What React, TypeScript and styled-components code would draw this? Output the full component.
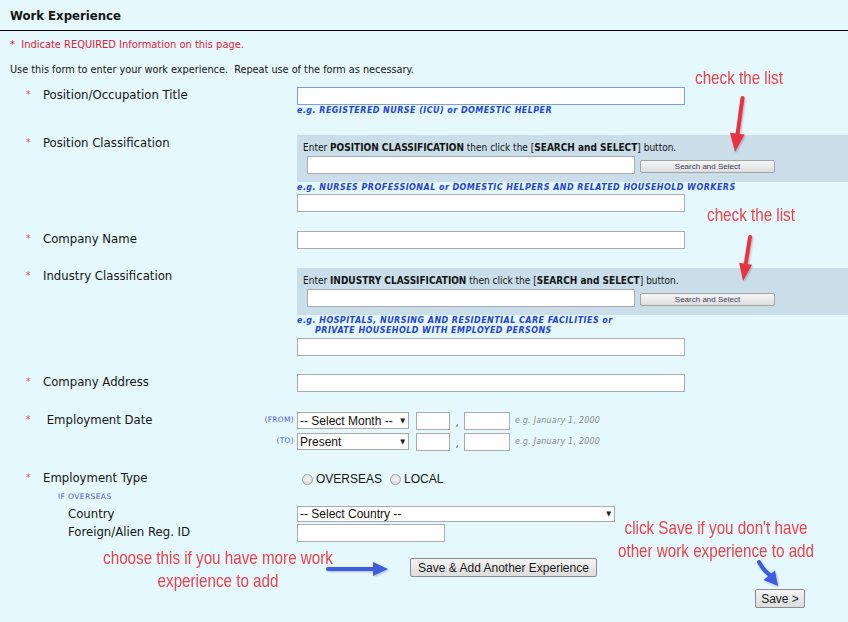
import React from 'react';
import styled, { createGlobalStyle } from 'styled-components';

const GlobalStyle = createGlobalStyle`
  html, body {
    margin: 0;
    padding: 0;
    background: #e4f8fd;
  }
  * { box-sizing: border-box; }
`;

const Page = styled.div`
  position: relative;
  width: 848px;
  height: 622px;
  overflow: hidden;
  background: #e4f8fd;
  font-family: "DejaVu Sans Condensed", "Liberation Sans", sans-serif;
  color: #151515;
`;

const Header = styled.h1`
  margin: 0;
  height: 31px;
  padding: 8px 10px 0;
  border-bottom: 1px solid #000;
  font-size: 13px;
  line-height: 16px;
  font-weight: bold;
`;

const RequiredNote = styled.div`
  margin: 7px 0 0 10px;
  font-size: 11px;
  line-height: 14px;
  color: #d9213b;
`;

const Intro = styled.div`
  margin: 11px 0 0 10px;
  font-size: 10.8px;
  line-height: 14px;
`;

const Form = styled.form`
  margin: 10px 0 0;
`;

const Row = styled.div<{ $mt: number }>`
  display: grid;
  grid-template-columns: 297px 551px;
  margin-top: ${p => p.$mt}px;
`;

const Label = styled.div<{ $indent?: number }>`
  display: flex;
  padding-left: ${p => p.$indent ?? 26}px;
  font-size: 13px;
  line-height: 16px;
`;

const Star = styled.span`
  width: 17px;
  color: #e0506a;
  font-size: 10px;
`;

const Field = styled.div`
  display: flex;
  flex-direction: column;
  align-items: flex-start;
`;

const TextInput = styled.input<{ $w: number; $focus?: boolean }>`
  width: ${p => p.$w}px;
  height: 18px;
  padding: 0 3px;
  border: 1px solid ${p => (p.$focus ? '#7b9fd6' : '#a7acb0')};
  background: #fff;
  font: 12px "Liberation Sans", Arial, sans-serif;
  outline: none;
`;

const Hint = styled.div`
  margin-top: 1px;
  font-family: "DejaVu Sans", Verdana, sans-serif;
  font-size: 8px;
  line-height: 10px;
  font-weight: bold;
  font-style: italic;
  color: #2343cf;
  letter-spacing: 0.45px;
`;

const HintLine = styled.div<{ $indent?: number }>`
  padding-left: ${p => p.$indent ?? 0}px;
`;

const SearchBox = styled.div`
  align-self: stretch;
  padding: 6px 0 8px 6px;
  background: #c9dee9;
`;

const BoxText = styled.div`
  font-size: 10px;
  line-height: 14px;

  b { font-weight: bold; }
`;

const BoxControls = styled.div`
  display: flex;
  align-items: center;
  gap: 5px;
  margin-top: 1px;
  padding-left: 4px;
`;

const SmallButton = styled.button`
  width: 135px;
  height: 13px;
  margin-top: 2px;
  padding: 0;
  border: 1px solid #a3a3a3;
  border-radius: 2px;
  background: linear-gradient(#f6f6f6, #dedede);
  font: 8px "Liberation Sans", Arial, sans-serif;
  line-height: 11px;
  color: #3a3a5a;
`;

const Spacer = styled.div`
  height: 16px;
`;

/* date block */
const DateGrid = styled.div<{ $mt: number }>`
  display: grid;
  grid-template-columns: 255px 42px 1fr;
  grid-auto-rows: 18px;
  row-gap: 3px;
  margin-top: ${p => p.$mt}px;
`;

const DateLabel = styled(Label)`
  grid-row: span 2;
  padding-left: 26px;
`;

const RangeTag = styled.div`
  padding-right: 3px;
  text-align: right;
  font-family: "DejaVu Sans", Verdana, sans-serif;
  font-size: 7.5px;
  line-height: 16px;
  color: #4a5cc4;
  letter-spacing: 0.3px;
`;

const DateLine = styled.div`
  display: flex;
  align-items: flex-start;
`;

const SelectWrap = styled.div<{ $w: number; $h: number }>`
  position: relative;
  width: ${p => p.$w}px;
  height: ${p => p.$h}px;
`;

const Select = styled.select`
  display: block;
  width: 100%;
  height: 100%;
  padding: 0 14px 0 2px;
  border: 1px solid #a9a9a9;
  border-radius: 0;
  background: #fff;
  appearance: none;
  font: 12px "Liberation Sans", Arial, sans-serif;
  color: #111;
`;

const SelectArrow = styled.span`
  position: absolute;
  right: 4px;
  top: 50%;
  transform: translateY(-50%);
  font-size: 7px;
  color: #222;
  pointer-events: none;
`;

const Comma = styled.span`
  width: 14px;
  text-align: center;
  font-size: 11px;
  line-height: 22px;
  color: #444;
`;

const DateExample = styled.span`
  margin-left: 5px;
  font-family: "DejaVu Sans", Verdana, sans-serif;
  font-size: 8px;
  font-style: italic;
  line-height: 18px;
  color: #8a8a8a;
  letter-spacing: 0.2px;
`;

const RadioGroup = styled.div`
  display: flex;
  align-items: center;
  height: 18px;
  padding-left: 5px;
  font: 12px "Liberation Sans", Arial, sans-serif;
`;

const RadioOption = styled.label`
  display: flex;
  align-items: center;
  gap: 3px;
  margin-right: 8px;
`;

const RadioDot = styled.span`
  width: 11px;
  height: 11px;
  border: 1px solid #a4a4a4;
  border-radius: 50%;
  background: radial-gradient(circle at 50% 45%, #f4f4f4 0%, #e2e2e2 55%, #c9c9c9 100%);
`;

const SubHeading = styled.div`
  margin-top: 4px;
  padding-left: 58px;
  font-family: "DejaVu Sans", Verdana, sans-serif;
  font-size: 7.5px;
  line-height: 10px;
  color: #4a5cc4;
  letter-spacing: 0.4px;
`;

const ActionRow = styled.div<{ $mt: number; $align: 'start' | 'end' }>`
  display: flex;
  justify-content: ${p => (p.$align === 'end' ? 'flex-end' : 'flex-start')};
  margin-top: ${p => p.$mt}px;
  padding: ${p => (p.$align === 'end' ? '0 43px 0 0' : '0 0 0 410px')};
`;

const FormButton = styled.button<{ $w: number }>`
  width: ${p => p.$w}px;
  height: 19px;
  padding: 0;
  border: 1px solid #8c8c8c;
  border-radius: 2px;
  background: linear-gradient(#f4f4f4, #dcdcdc);
  font: 12px "Liberation Sans", Arial, sans-serif;
  color: #1a1a1a;
`;

/* annotations drawn over the screenshot */
const Note = styled.div<{ $left: number; $top: number; $w: number }>`
  position: absolute;
  left: ${p => p.$left}px;
  top: ${p => p.$top}px;
  width: ${p => p.$w}px;
  text-align: center;
  font-family: "Liberation Sans", Arial, sans-serif;
  font-size: 19px;
  line-height: 23px;
  color: #e6434f;
  white-space: nowrap;
  transform: scaleX(0.8);
`;

const ArrowLayer = styled.svg`
  position: absolute;
  left: 0;
  top: 0;
  pointer-events: none;
`;

const Required = () => <Star>*</Star>;

const MonthSelect: React.FC<{ value: string }> = ({ value }) => (
  <SelectWrap $w={112} $h={17}>
    <Select defaultValue={value}>
      <option>-- Select Month --</option>
      <option>Present</option>
    </Select>
    <SelectArrow>▼</SelectArrow>
  </SelectWrap>
);

const DateFields: React.FC<{ month: string }> = ({ month }) => (
  <DateLine>
    <MonthSelect value={month} />
    <TextInput $w={34} style={{ marginLeft: 7 }} />
    <Comma>,</Comma>
    <TextInput $w={46} />
    <DateExample>e.g. January 1, 2000</DateExample>
  </DateLine>
);

export default function App() {
  return (
    <Page>
      <GlobalStyle />
      <Header>Work Experience</Header>
      <RequiredNote>*&nbsp; Indicate REQUIRED Information on this page.</RequiredNote>
      <Intro>Use this form to enter your work experience.&nbsp; Repeat use of the form as necessary.</Intro>

      <Form onSubmit={e => e.preventDefault()}>
        <Row $mt={0}>
          <Label><Required />Position/Occupation Title</Label>
          <Field>
            <TextInput $w={388} $focus />
            <Hint>e.g. REGISTERED NURSE (ICU) or DOMESTIC HELPER</Hint>
          </Field>
        </Row>

        <Row $mt={19}>
          <Label><Required />Position Classification</Label>
          <Field>
            <SearchBox>
              <BoxText>Enter <b>POSITION CLASSIFICATION</b> then click the [<b>SEARCH and SELECT</b>] button.</BoxText>
              <BoxControls>
                <TextInput $w={328} />
                <SmallButton type="button">Search and Select</SmallButton>
              </BoxControls>
            </SearchBox>
            <Hint>e.g. NURSES PROFESSIONAL or DOMESTIC HELPERS AND RELATED HOUSEHOLD WORKERS</Hint>
            <TextInput $w={388} style={{ marginTop: 1 }} />
          </Field>
        </Row>

        <Row $mt={19}>
          <Label><Required />Company Name</Label>
          <Field>
            <TextInput $w={388} />
          </Field>
        </Row>

        <Row $mt={19}>
          <Label><Required />Industry Classification</Label>
          <Field>
            <SearchBox>
              <BoxText>Enter <b>INDUSTRY CLASSIFICATION</b> then click the [<b>SEARCH and SELECT</b>] button.</BoxText>
              <BoxControls>
                <TextInput $w={328} />
                <SmallButton type="button">Search and Select</SmallButton>
              </BoxControls>
            </SearchBox>
            <Hint>
              <HintLine>e.g. HOSPITALS, NURSING AND RESIDENTIAL CARE FACILITIES or</HintLine>
              <HintLine $indent={18}>PRIVATE HOUSEHOLD WITH EMPLOYED PERSONS</HintLine>
            </Hint>
            <TextInput $w={388} style={{ marginTop: 2 }} />
          </Field>
        </Row>

        <Row $mt={18}>
          <Label><Required />Company Address</Label>
          <Field>
            <TextInput $w={388} />
          </Field>
        </Row>

        <DateGrid $mt={20}>
          <DateLabel><Required />&nbsp;Employment Date</DateLabel>
          <RangeTag>(FROM)</RangeTag>
          <DateFields month="-- Select Month --" />
          <RangeTag>(TO)</RangeTag>
          <DateFields month="Present" />
        </DateGrid>

        <Row $mt={19}>
          <Label><Required />Employment Type</Label>
          <Field>
            <RadioGroup>
              <RadioOption><RadioDot />OVERSEAS</RadioOption>
              <RadioOption><RadioDot />LOCAL</RadioOption>
            </RadioGroup>
          </Field>
        </Row>

        <SubHeading>IF OVERSEAS</SubHeading>

        <Row $mt={4}>
          <Label $indent={68}>Country</Label>
          <Field>
            <SelectWrap $w={318} $h={16}>
              <Select defaultValue="-- Select Country --">
                <option>-- Select Country --</option>
              </Select>
              <SelectArrow>▼</SelectArrow>
            </SelectWrap>
          </Field>
        </Row>

        <Row $mt={2}>
          <Label $indent={68}>Foreign/Alien Reg. ID</Label>
          <Field>
            <TextInput $w={148} />
          </Field>
        </Row>

        <ActionRow $mt={16} $align="start">
          <FormButton type="button" $w={187}>Save &amp; Add Another Experience</FormButton>
        </ActionRow>
        <ActionRow $mt={12} $align="end">
          <FormButton type="submit" $w={50}>Save &gt;</FormButton>
        </ActionRow>
        <Spacer />
      </Form>

      <Note $left={650} $top={66} $w={178}>check the list</Note>
      <Note $left={662} $top={203} $w={178}>check the list</Note>
      <Note $left={58} $top={546} $w={320}>
        choose this if you have more work
        <br />
        experience to add
      </Note>
      <Note $left={556} $top={516} $w={320}>
        click Save if you don't have
        <br />
        other work experience to add
      </Note>

      <ArrowLayer width="848" height="622" viewBox="0 0 848 622">
        <defs>
          <filter id="soft" x="-20%" y="-20%" width="140%" height="140%">
            <feDropShadow dx="1" dy="1" stdDeviation="1" floodOpacity="0.25" />
          </filter>
        </defs>
        <g filter="url(#soft)">
          <line x1="742.5" y1="98" x2="737.3" y2="136" stroke="#e8333f" strokeWidth="4" strokeLinecap="round" />
          <polygon points="744.6,134.5 735,152 730,132.8" fill="#e8333f" />
          <line x1="750" y1="237" x2="745.6" y2="265" stroke="#e8333f" strokeWidth="4" strokeLinecap="round" />
          <polygon points="752,264.8 743,281 739.2,262.8" fill="#e8333f" />
          <line x1="328" y1="569" x2="375" y2="569" stroke="#3c5be2" strokeWidth="4" strokeLinecap="round" />
          <polygon points="373,562 388,569 373,576" fill="#3c5be2" />
          <path d="M759 562 Q763 570 770 575" fill="none" stroke="#3c5be2" strokeWidth="4" strokeLinecap="round" />
          <polygon points="763.4,580 778,586 775,570.5" fill="#3c5be2" />
        </g>
      </ArrowLayer>
    </Page>
  );
}
